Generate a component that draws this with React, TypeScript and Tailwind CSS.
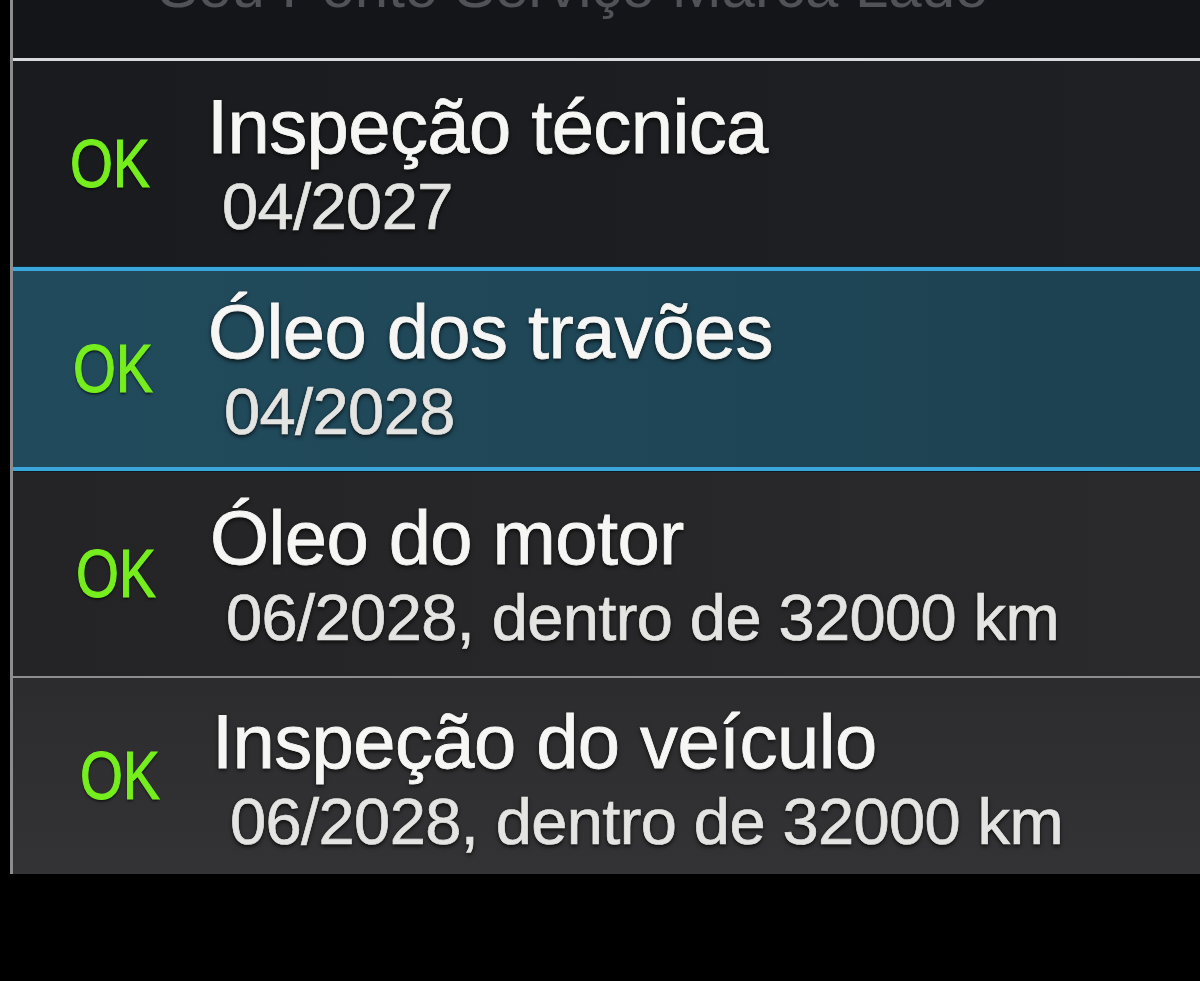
import React from "react";

type Row = {
  title: string;
  sub: string;
  bg: string;
  h: string;
  pt: string;
  okPl: string;
  textPl: string;
  subPl: string;
};

const rows: Row[] = [
  {
    title: "Inspeção técnica",
    sub: "04/2027",
    bg: "bg-[linear-gradient(90deg,#1a1b1e,#1f2023)]",
    h: "h-[205px]",
    pt: "pt-[26px]",
    okPl: "pl-[57px]",
    textPl: "w-[137px]",
    subPl: "pl-[15px]",
  },
  {
    title: "Óleo dos travões",
    sub: "04/2028",
    bg: "bg-[linear-gradient(90deg,#214b5c,#1d4252)]",
    h: "h-[196px]",
    pt: "pt-[21px]",
    okPl: "pl-[60px]",
    textPl: "w-[135px]",
    subPl: "pl-[16px]",
  },
  {
    title: "Óleo do motor",
    sub: "06/2028, dentro de 32000 km",
    bg: "bg-[linear-gradient(90deg,#242426,#2a2a2c)]",
    h: "h-[204px]",
    pt: "pt-[26px]",
    okPl: "pl-[63px]",
    textPl: "w-[134px]",
    subPl: "pl-[16px]",
  },
  {
    title: "Inspeção do veículo",
    sub: "06/2028, dentro de 32000 km",
    bg: "bg-[linear-gradient(180deg,#2c2c2e,#333335)]",
    h: "h-[196px]",
    pt: "pt-[24px]",
    okPl: "pl-[67px]",
    textPl: "w-[132px]",
    subPl: "pl-[18px]",
  },
];

function RowView({ r }: { r: Row }) {
  return (
    <div className={`${r.h} ${r.bg} ${r.okPl} flex items-start`}>
      <div className={`${r.textPl} self-center shrink-0`}>
        <span className="inline-block origin-left scale-x-[0.8] text-[69px] leading-[68px] text-[#76ee1e] [-webkit-text-stroke:1.2px_#76ee1e] [text-shadow:0_2px_3px_rgba(0,0,0,0.7)]">
          OK
        </span>
      </div>
      <div className={`${r.pt} flex flex-col`}>
        <div className="text-[76px] leading-[80px] tracking-[-0.6px] text-[#f6f6f4] whitespace-nowrap [-webkit-text-stroke:0.8px_#f6f6f4] [text-shadow:0_2px_4px_rgba(0,0,0,0.85)]">
          {r.title}
        </div>
        <div
          className={`${r.subPl} text-[65px] leading-[80px] tracking-[-0.6px] text-[#e4e4e2] whitespace-nowrap [-webkit-text-stroke:0.7px_#e4e4e2] [text-shadow:0_2px_4px_rgba(0,0,0,0.85)]`}
        >
          {r.sub}
        </div>
      </div>
    </div>
  );
}

export default function App() {
  return (
    <div
      className="w-[1200px] h-[981px] bg-black flex items-start overflow-hidden"
      style={{ fontFamily: '"Liberation Sans", Arial, sans-serif' }}
    >
      <div className="w-[10px] shrink-0" />
      <div className="flex-1 h-[874px] border-l-[3px] border-[#8c8c8e] flex flex-col">
        <div className="h-[58px] bg-[#141519] overflow-hidden pl-[145px]">
          <div className="-mt-[43px] text-[60px] leading-[60px] text-[#505257] whitespace-nowrap">
            Seu Ponto Serviço Marca Lado
          </div>
        </div>
        <div className="h-[3px] bg-[#d9d9dc]" />
        <RowView r={rows[0]} />
        <div className="h-[5px] bg-[#3aa6dc] border-t border-[#0d2a38]" />
        <RowView r={rows[1]} />
        <div className="h-[5px] bg-[#3aa6dc] border-b border-[#0d1a20]" />
        <RowView r={rows[2]} />
        <div className="h-[2px] bg-[#8d8d8f]" />
        <RowView r={rows[3]} />
      </div>
    </div>
  );
}
